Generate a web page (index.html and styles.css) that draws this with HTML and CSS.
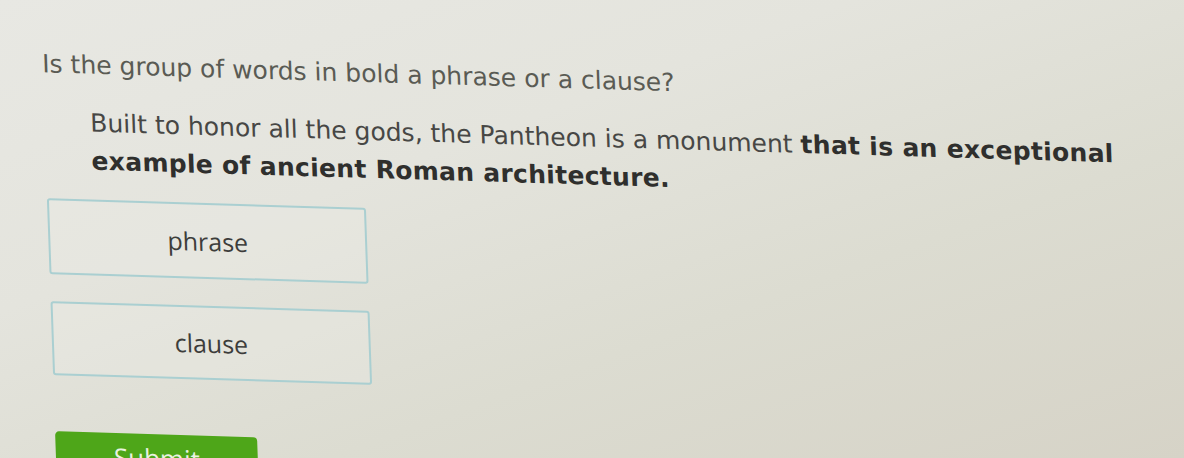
FILE: index.html
```html
<!DOCTYPE html>
<html>
<head>
<meta charset="utf-8">
<link rel="stylesheet" href="styles.css">
</head>
<body>
<main class="quiz">
  <p class="question">Is the group of words in bold a phrase or a clause?</p>
  <p class="passage">Built to honor all the gods, the Pantheon is a monument <b>that is an exceptional example of ancient Roman architecture.</b></p>
  <div class="options">
    <button class="option">phrase</button>
    <button class="option">clause</button>
  </div>
  <button class="submit">Submit</button>
</main>
</body>
</html>
```
FILE: styles.css
```css
html, body {
  margin: 0;
  height: 100%;
}
body {
  background: linear-gradient(160deg, #e8e8e3 0%, #e4e4dd 35%, #dcdcd1 65%, #d6d3c7 100%);
  font-family: "DejaVu Sans", Verdana, sans-serif;
  overflow: hidden;
}
.quiz {
  padding: 48px 0 0 40px;
  display: flex;
  flex-direction: column;
  align-items: flex-start;
  transform-origin: 0 0;
  transform: matrix(1, 0.03, 0.035, 1, 0, 0);
}
.question {
  margin: 0;
  font-size: 25px;
  line-height: 30px;
  color: #5a5b54;
}
.passage {
  margin: 24px 0 0 46px;
  font-size: 25px;
  line-height: 38px;
  color: #474745;
}
.passage b {
  color: #2f2f2d;
  letter-spacing: 0.3px;
}
.options {
  margin-top: 19px;
  display: flex;
  flex-direction: column;
  gap: 27px;
}
.option {
  width: 319px;
  height: 76px;
  background: rgba(236, 236, 230, 0.35);
  border: 2px solid #aacfd1;
  border-radius: 3px;
  font-family: "Open Sans", "Liberation Sans", sans-serif;
  font-size: 25px;
  color: #3d3d3b;
  padding: 0;
}
.option + .option {
  height: 74px;
}
.submit {
  margin: 56px 0 0 0;
  width: 202px;
  height: 50px;
  background: #4ea619;
  border: none;
  border-radius: 4px 4px 0 0;
  color: #e9f3e0;
  font-family: "Open Sans", "Liberation Sans", sans-serif;
  font-size: 26px;
  line-height: 36px;
  padding: 6px 0 0;
  display: flex;
  justify-content: center;
  align-items: flex-start;
}
```
